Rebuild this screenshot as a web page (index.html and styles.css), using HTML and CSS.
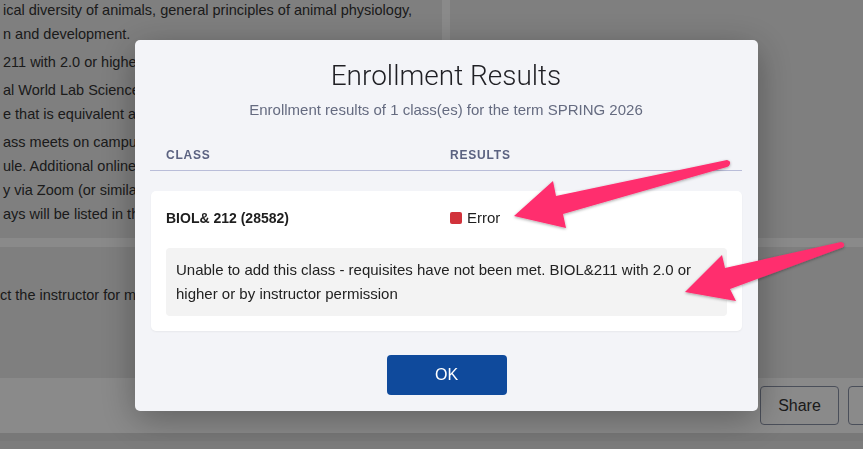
FILE: index.html
```html
<!DOCTYPE html>
<html lang="en">
<head>
    <meta charset="UTF-8">
    <meta name="viewport" content="width=device-width, initial-scale=1.0">
    <title>Enrollment Results</title>
    <link rel="stylesheet" href="styles.css">
</head>
<body>
    <div class="page">
        <div class="top-row">
            <div class="card description">
                <p>ical diversity of animals, general principles of animal physiology,<br>n and development.</p>
                <p>211 with 2.0 or higher or by instructor permission.</p>
                <p>al World Lab Science requirement for the AA degree.<br>e that is equivalent and transferable.</p>
                <p>ass meets on campus according to the published<br>ule. Additional online work is required each week,<br>y via Zoom (or similar) may also be scheduled. The<br>ays will be listed in the course syllabus.</p>
            </div>
            <div class="card side"></div>
        </div>
        <div class="card notes">
            <p>ct the instructor for more information about this class.</p>
        </div>
        <div class="actions">
            <button class="btn-outline">Share</button>
            <button class="btn-outline">Save</button>
        </div>
        <div class="bottom"></div>
    </div>

    <div class="overlay"></div>

    <div class="modal">
        <h1>Enrollment Results</h1>
        <div class="subtitle">Enrollment results of 1 class(es) for the term SPRING 2026</div>

        <div class="results-head">
            <div>CLASS</div>
            <div>RESULTS</div>
        </div>

        <div class="result-card">
            <div class="result-row">
                <div class="class-name">BIOL&amp; 212 (28582)</div>
                <div class="status"><span class="status-dot"></span>Error</div>
            </div>
            <div class="message">Unable to add this class - requisites have not been met. BIOL&amp;211 with 2.0 or higher or by instructor permission</div>
        </div>

        <div class="modal-footer">
            <button class="btn-primary">OK</button>
        </div>
    </div>

    <svg class="arrows" viewBox="0 0 863 449" width="863" height="449">
        <defs>
            <filter id="arrowShadow" x="-20%" y="-20%" width="140%" height="140%">
                <feDropShadow dx="0" dy="1" stdDeviation="1.5" flood-color="#000" flood-opacity="0.35"/>
            </filter>
        </defs>
        <g fill="#ff2d6e" filter="url(#arrowShadow)">
            <path d="M514 216 L553 181 L556 196 L727 160 Q731 161 730 164 Q729 167 727 167 L563 214 L566 228 Z"/>
            <path d="M685 292 L722 255 L725 268 L841 242 Q845 243 844 246 Q843 248 841 248 L730 289 L736 301 Z"/>
        </g>
    </svg>
</body>
</html>
```

FILE: styles.css
```css
html, body {
    margin: 0;
    height: 100%;
    overflow: hidden;
}
body {
    font-family: "Liberation Sans", Arial, sans-serif;
    font-size: 14.5px;
    color: #333;
    background-color: #fff;
}
.page {
    display: flex;
    flex-direction: column;
}
.top-row {
    display: grid;
    grid-template-columns: 442px 1fr;
    gap: 8px;
    height: 238px;
}
.card {
    background-color: #ebebeb;
}
.description {
    padding: 0 0 0 3px;
    line-height: 24px;
    white-space: nowrap;
    overflow: hidden;
}
.description p {
    margin: -2px 0 6px;
}
.notes {
    margin-top: 9px;
    height: 131px;
    box-sizing: border-box;
    padding-top: 36px;
    white-space: nowrap;
}
.notes p {
    margin: 0;
    line-height: 24px;
}
.actions {
    display: flex;
    justify-content: flex-end;
    gap: 9px;
    padding: 8px 0;
    margin-right: -64px;
    background-color: #fff;
    border-bottom: 8px solid #dedede;
}
.btn-outline {
    width: 79px;
    height: 39px;
    border: 1px solid #8a92a6;
    border-radius: 4px;
    background: transparent;
    font-family: inherit;
    font-size: 16px;
    color: #333;
}
.bottom {
    height: 20px;
    background-color: #e6e6e6;
}

.overlay {
    position: fixed;
    inset: 0;
    background-color: rgba(0,0,0,0.46);
}

.modal {
    position: fixed;
    left: 135px;
    top: 40px;
    width: 623px;
    box-sizing: border-box;
    padding: 18px 16px 16px 15px;
    font-size: 15px;
    background-color: #f3f4f8;
    border-radius: 5px;
    box-shadow: 0 8px 36px rgba(0,0,0,0.32);
}
.modal h1 {
    margin: 0;
    text-align: center;
    font-family: Roboto, "Liberation Sans", sans-serif;
    font-weight: 300;
    font-size: 28px;
    line-height: 36px;
    color: #1f1f24;
}
.subtitle {
    margin-top: 6px;
    text-align: center;
    line-height: 20px;
    color: #656b80;
}
.results-head {
    display: grid;
    grid-template-columns: 284px 1fr;
    margin-top: 20px;
    padding: 7px 0 7px 16px;
    border-bottom: 1px solid #b9bdd9;
    font-size: 12px;
    font-weight: bold;
    line-height: 16px;
    letter-spacing: 0.8px;
    color: #5b6281;
}
.result-card {
    margin-top: 20px;
    margin-left: 1px;
    padding: 17px 15px 15px;
    background-color: #fff;
    border-radius: 5px;
    box-shadow: 0 1px 2px rgba(0,0,0,0.05);
}
.result-row {
    display: grid;
    grid-template-columns: 284px 1fr;
    line-height: 20px;
}
.class-name {
    font-size: 14px;
    font-weight: bold;
    color: #1e1e1e;
}
.status {
    display: flex;
    align-items: center;
    gap: 5px;
    color: #1e1e1e;
}
.status-dot {
    width: 12px;
    height: 12px;
    border-radius: 2px;
    background-color: #d1323b;
}
.message {
    margin-top: 20px;
    padding: 10px 10px;
    background-color: #f3f3f3;
    border-radius: 4px;
    line-height: 24px;
    color: #222;
}
.modal-footer {
    display: flex;
    justify-content: center;
    margin-top: 24px;
    padding-left: 1px;
}
.btn-primary {
    width: 120px;
    height: 40px;
    border: none;
    border-radius: 4px;
    background-color: #0f4a9c;
    color: #fff;
    font-family: inherit;
    font-size: 16px;
    cursor: pointer;
}

.arrows {
    position: fixed;
    left: 0;
    top: 0;
    pointer-events: none;
}
```
